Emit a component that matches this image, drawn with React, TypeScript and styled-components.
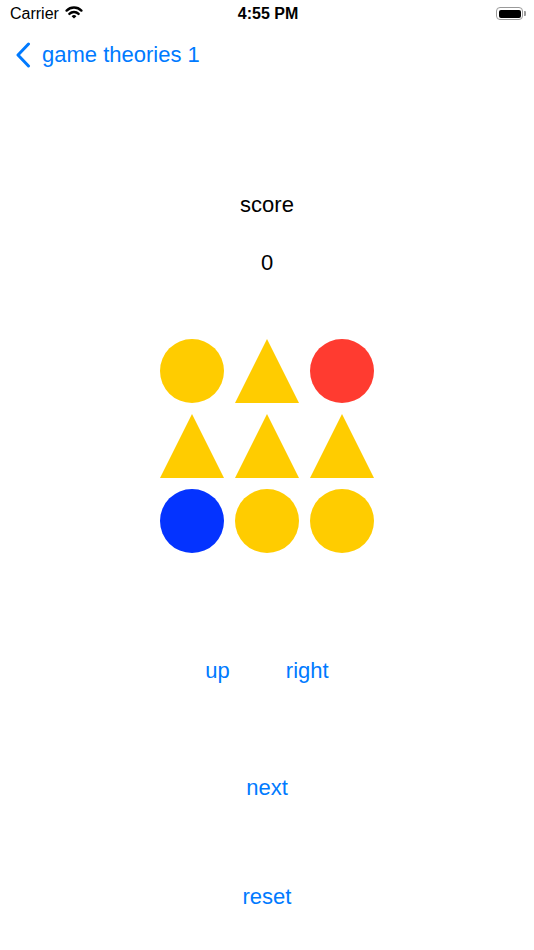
import React from 'react';
import styled, { createGlobalStyle } from 'styled-components';

type ShapeKind = 'circle' | 'triangle';

interface Cell {
  kind: ShapeKind;
  color: string;
}

const YELLOW = '#FFCC00';
const RED = '#FF3B30';
const BLUE = '#0433FF';

const cells: Cell[] = [
  { kind: 'circle', color: YELLOW },
  { kind: 'triangle', color: YELLOW },
  { kind: 'circle', color: RED },
  { kind: 'triangle', color: YELLOW },
  { kind: 'triangle', color: YELLOW },
  { kind: 'triangle', color: YELLOW },
  { kind: 'circle', color: BLUE },
  { kind: 'circle', color: YELLOW },
  { kind: 'circle', color: YELLOW },
];

const WifiIcon = () => (
  <svg width="18" height="13" viewBox="0 0 18 13">
    <path d="M1.6 4.6 A10.5 10.5 0 0 1 16.4 4.6" fill="none" stroke="#000" strokeWidth="2.4" strokeLinecap="round" />
    <path d="M4.4 7.9 A6.5 6.5 0 0 1 13.6 7.9" fill="none" stroke="#000" strokeWidth="2.4" strokeLinecap="round" />
    <path d="M9 12.6 L6.6 10.2 A3.4 3.4 0 0 1 11.4 10.2 Z" fill="#000" />
  </svg>
);

const Battery = () => (
  <BatteryWrap>
    <BatteryBody>
      <BatteryFill />
    </BatteryBody>
    <BatteryNub />
  </BatteryWrap>
);

const Chevron = () => (
  <svg width="16" height="26" viewBox="0 0 16 26">
    <path d="M13.5 2 L3 13 L13.5 24" fill="none" stroke="#007AFF" strokeWidth="3" strokeLinecap="round" strokeLinejoin="round" />
  </svg>
);

const App: React.FC = () => {
  return (
    <Screen>
      <GlobalStyle />
      <StatusBar>
        <StatusLeft>
          <span>Carrier</span>
          <WifiIcon />
        </StatusLeft>
        <Clock>4:55 PM</Clock>
        <StatusRight>
          <Battery />
        </StatusRight>
      </StatusBar>

      <NavBar>
        <BackButton>
          <Chevron />
          <span>game theories 1</span>
        </BackButton>
      </NavBar>

      <Content>
        <Label>score</Label>
        <Score>0</Score>

        <Board>
          {cells.map((cell, i) => (
            <Shape key={i} kind={cell.kind} color={cell.color} />
          ))}
        </Board>

        <MoveRow>
          <LinkButton>up</LinkButton>
          <LinkButton>right</LinkButton>
        </MoveRow>

        <NextButton>next</NextButton>
        <ResetButton>reset</ResetButton>
      </Content>
    </Screen>
  );
};

const GlobalStyle = createGlobalStyle`
  html, body {
    margin: 0;
    padding: 0;
    background: #fff;
  }
  body {
    font-family: "Liberation Sans", Arial, sans-serif;
    -webkit-font-smoothing: antialiased;
  }
`;

const Screen = styled.div`
  width: 534px;
  height: 950px;
  display: flex;
  flex-direction: column;
  background: #fff;
  overflow: hidden;
`;

const StatusBar = styled.div`
  height: 28px;
  box-sizing: border-box;
  padding: 4px 8px 0 10px;
  display: grid;
  grid-template-columns: 1fr auto 1fr;
  align-items: start;
  font-size: 16px;
  line-height: 20px;
  color: #000;
`;

const StatusLeft = styled.div`
  display: flex;
  align-items: center;
  gap: 6px;

  svg {
    margin-top: -4px;
  }
`;

const Clock = styled.div`
  font-weight: bold;
`;

const StatusRight = styled.div`
  display: flex;
  justify-content: flex-end;
  padding-top: 3px;
`;

const BatteryWrap = styled.div`
  display: flex;
  align-items: center;
  gap: 1px;
`;

const BatteryBody = styled.div`
  width: 27px;
  height: 13px;
  box-sizing: border-box;
  border: 1.5px solid #9a9a9a;
  border-radius: 4px;
  padding: 1.5px;
  display: flex;
`;

const BatteryFill = styled.div`
  flex: 1;
  background: #000;
  border-radius: 2px;
`;

const BatteryNub = styled.div`
  width: 2px;
  height: 5px;
  background: #9a9a9a;
  border-radius: 0 1px 1px 0;
`;

const NavBar = styled.div`
  height: 62px;
  box-sizing: border-box;
  padding: 13px 0 0 15px;
`;

const BackButton = styled.div`
  display: flex;
  align-items: center;
  gap: 11px;
  color: #007AFF;
  font-size: 22px;
  line-height: 27px;
`;

const Content = styled.div`
  display: flex;
  flex-direction: column;
  align-items: center;
  padding-top: 101px;
`;

const TextLine = styled.div`
  font-size: 22px;
  line-height: 27px;
`;

const Label = styled(TextLine)`
  color: #000;
`;

const Score = styled(TextLine)`
  color: #000;
  margin-top: 31px;
`;

const Board = styled.div`
  margin-top: 63px;
  display: grid;
  grid-template-columns: repeat(3, 64px);
  grid-auto-rows: 64px;
  gap: 11px;
`;

const Shape = styled.div<{ kind: ShapeKind; color: string }>`
  background: ${p => p.color};
  border-radius: ${p => (p.kind === 'circle' ? '50%' : '0')};
  clip-path: ${p => (p.kind === 'triangle' ? 'polygon(50% 0, 100% 100%, 0 100%)' : 'none')};
`;

const LinkButton = styled(TextLine)`
  color: #007AFF;
`;

const MoveRow = styled.div`
  margin-top: 104px;
  display: flex;
  gap: 56px;
`;

const NextButton = styled(LinkButton)`
  margin-top: 90px;
`;

const ResetButton = styled(LinkButton)`
  margin-top: 82px;
`;

export default App;
